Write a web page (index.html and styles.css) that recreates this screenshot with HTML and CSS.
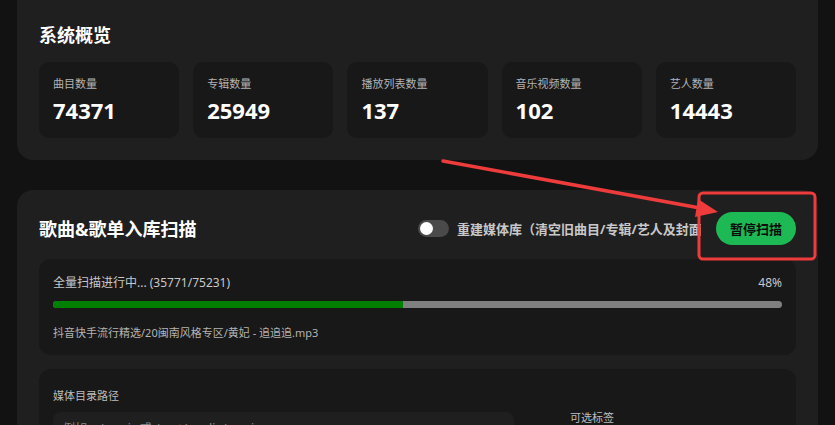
FILE: index.html
```html
<!DOCTYPE html>
<html lang="zh-CN">
<head>
  <meta charset="UTF-8">
  <meta name="viewport" content="width=device-width, initial-scale=1.0">
  <title>媒体库设置</title>
  <link rel="stylesheet" href="styles.css">
</head>
<body>
  <div class="page">
    <section class="card overview">
      <h2>系统概览</h2>
      <div class="stats">
        <div class="stat">
          <div class="stat-label">曲目数量</div>
          <div class="stat-value">74371</div>
        </div>
        <div class="stat">
          <div class="stat-label">专辑数量</div>
          <div class="stat-value">25949</div>
        </div>
        <div class="stat">
          <div class="stat-label">播放列表数量</div>
          <div class="stat-value">137</div>
        </div>
        <div class="stat">
          <div class="stat-label">音乐视频数量</div>
          <div class="stat-value">102</div>
        </div>
        <div class="stat">
          <div class="stat-label">艺人数量</div>
          <div class="stat-value">14443</div>
        </div>
      </div>
    </section>

    <section class="card scan">
      <div class="scan-header">
        <h2>歌曲&amp;歌单入库扫描</h2>
        <div class="scan-actions">
          <label class="switch">
            <span class="switch-track"><span class="switch-knob"></span></span>
            <span class="switch-text">重建媒体库（清空旧曲目/专辑/艺人及封面）</span>
          </label>
          <button class="btn-pause">暂停扫描</button>
        </div>
      </div>

      <div class="panel progress">
        <div class="progress-head">
          <span>全量扫描进行中... (35771/75231)</span>
          <span>48%</span>
        </div>
        <div class="bar"><div class="bar-fill" style="width: 48%"></div></div>
        <div class="current-file">抖音快手流行精选/20闽南风格专区/黄妃 - 追追追.mp3</div>
      </div>

      <div class="panel paths">
        <div class="field-label">媒体目录路径</div>
        <div class="path-row">
          <div class="path-input">例如：/music 或 /mnt/media/music</div>
          <div class="tag-col">
            <div class="field-label">可选标签</div>
          </div>
        </div>
      </div>
    </section>
  </div>

  <!-- annotation overlay -->
  <svg class="annot" width="835" height="425" viewBox="0 0 835 425">
    <line x1="443" y1="161" x2="700" y2="208" stroke="#ee3b3b" stroke-width="3.5" stroke-linecap="round"/>
    <polygon points="718,212 698,199 695,217" fill="#ee3b3b"/>
    <rect x="699" y="193" width="116" height="66" rx="4" fill="none" stroke="#ee3b3b" stroke-width="3"/>
  </svg>
</body>
</html>
```

FILE: styles.css
```css
html, body {
  margin: 0;
  height: 100%;
  overflow: hidden;
}

body {
  background: #121212;
  color: #fff;
  font-family: "Noto Sans", "Noto Sans CJK SC", sans-serif;
  position: relative;
}

.page {
  padding: 0 17px;
  margin-top: -20px;
}

.card {
  background: #1f1f1f;
  border-radius: 16px;
  padding: 22px;
  margin-bottom: 30px;
}

.overview {
  padding-top: 42px;
}

.card h2 {
  margin: 0;
  font-size: 18px;
  line-height: 26px;
  font-weight: 700;
}

.stats {
  display: grid;
  grid-template-columns: repeat(5, 1fr);
  gap: 14px;
  margin-top: 14px;
}

.stat {
  background: #181818;
  border-radius: 10px;
  padding: 14px;
}

.stat-label {
  font-size: 11px;
  line-height: 16px;
  color: #b3b3b3;
}

.stat-value {
  font-size: 22px;
  line-height: 28px;
  font-weight: 700;
  margin-top: 4px;
}

.scan-header {
  display: flex;
  justify-content: space-between;
  align-items: center;
}

.scan-actions {
  display: flex;
  align-items: center;
}

.switch {
  display: flex;
  align-items: center;
  gap: 8px;
}

.switch-track {
  width: 31px;
  height: 17px;
  border-radius: 9px;
  background: #4a4a4a;
  display: flex;
  align-items: center;
  padding: 0 2px;
  box-sizing: border-box;
}

.switch-knob {
  width: 13px;
  height: 13px;
  border-radius: 50%;
  background: #fff;
}

.switch-text {
  font-size: 13px;
  font-weight: 700;
  color: #c8c8c8;
  white-space: nowrap;
  overflow: hidden;
  width: 244px;
}

.btn-pause {
  margin-left: 15px;
  background: #1db954;
  color: #0b0b0b;
  border: none;
  border-radius: 17px;
  width: 80px;
  height: 33px;
  font-family: inherit;
  font-size: 13px;
  font-weight: 700;
  cursor: pointer;
}

.panel {
  background: #181818;
  border-radius: 12px;
  padding: 15px 14px 14px;
  margin-top: 14px;
}

.progress-head {
  display: flex;
  justify-content: space-between;
  font-size: 12px;
  line-height: 18px;
  color: #c8c8c8;
}

.bar {
  height: 7px;
  border-radius: 4px;
  background: #808080;
  margin-top: 9px;
  overflow: hidden;
}

.bar-fill {
  height: 100%;
  background: #008000;
}

.current-file {
  margin-top: 17px;
  font-size: 11px;
  line-height: 16px;
  color: #b3b3b3;
}

.paths {
  padding-top: 19px;
}

.field-label {
  font-size: 11px;
  line-height: 16px;
  color: #bdbdbd;
}

.path-row {
  display: flex;
  align-items: flex-start;
  margin-top: 8px;
}

.path-input {
  width: 461px;
  height: 36px;
  box-sizing: border-box;
  background: #1f1f1f;
  border-radius: 8px;
  padding: 9px 10px;
  font-size: 12px;
  line-height: 16px;
  color: #8a8a8a;
}

.tag-col {
  margin-left: 56px;
  margin-top: -2px;
}

.annot {
  position: absolute;
  top: 0;
  left: 0;
  pointer-events: none;
}
```
